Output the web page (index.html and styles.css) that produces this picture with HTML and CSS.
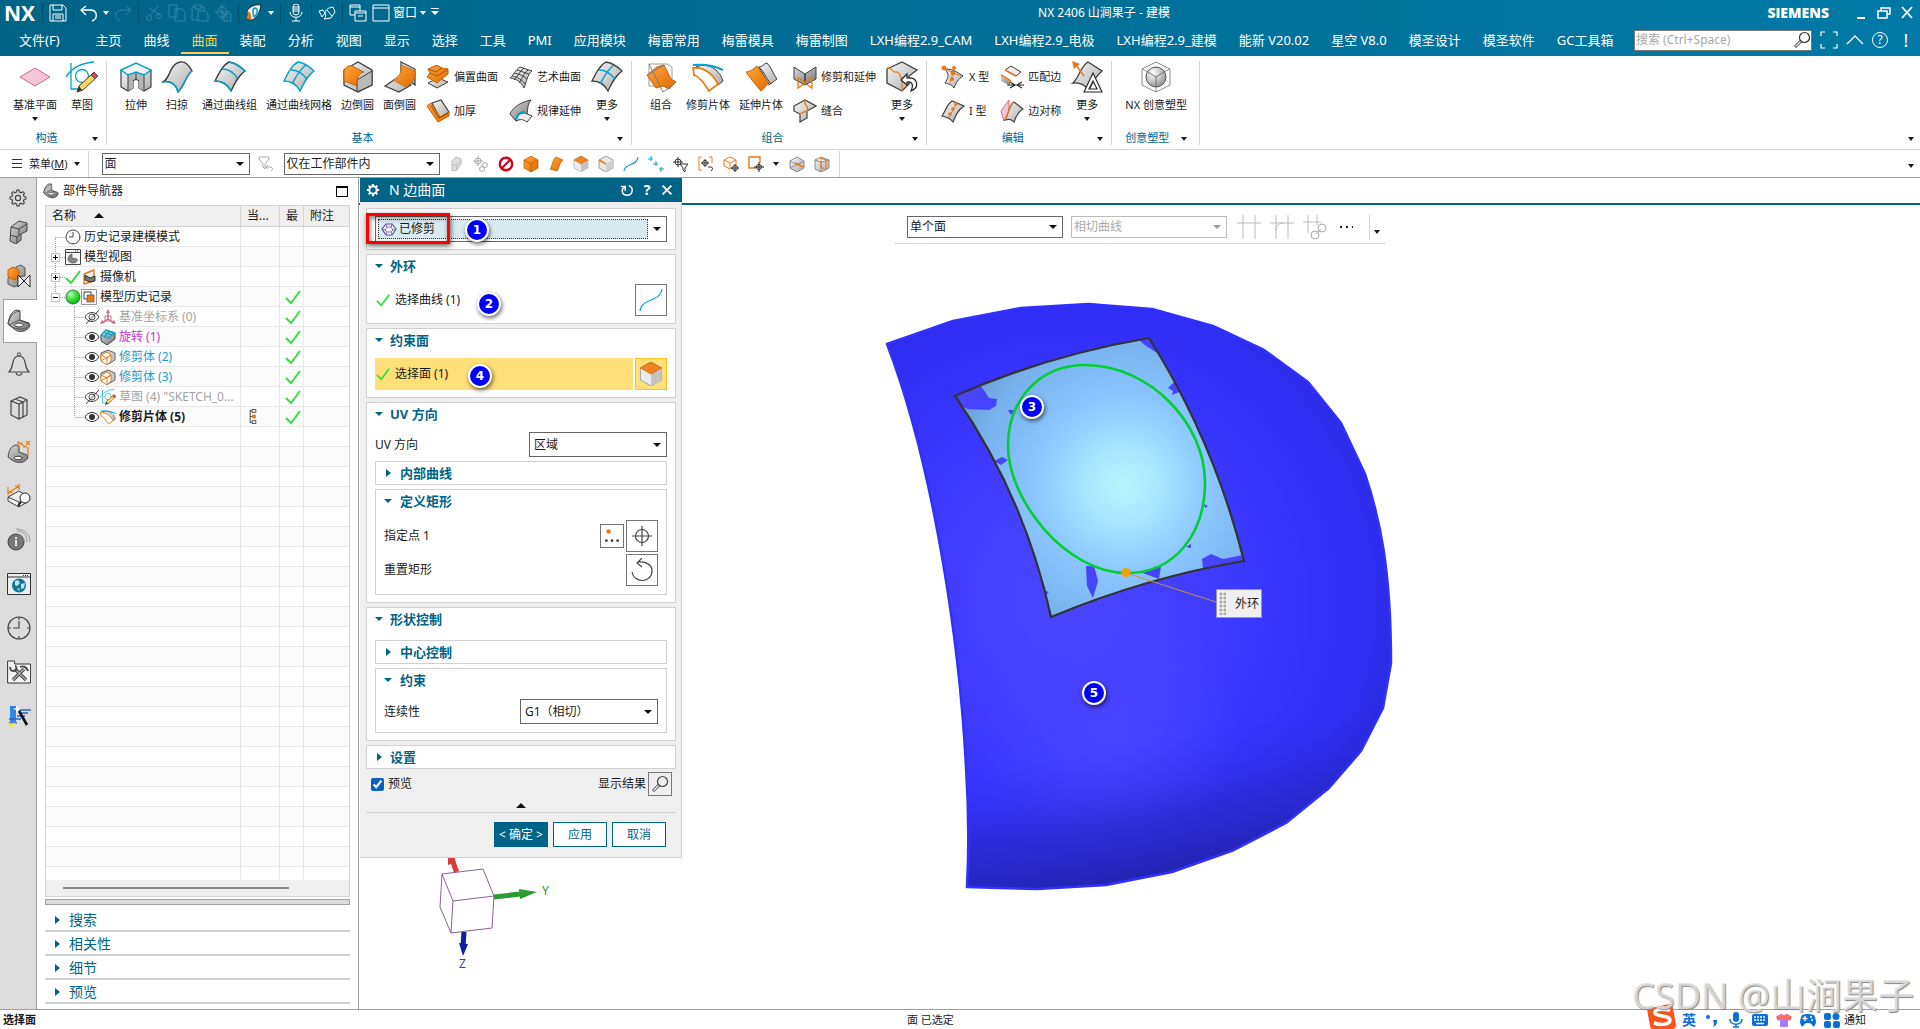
FILE: index.html
```
<!DOCTYPE html>
<html lang="zh-CN">
<head>
    <meta charset="UTF-8">
    <meta name="viewport" content="width=device-width, initial-scale=1.0">
    <title>NX 2406 山涧果子 - 建模</title>
    <link rel="stylesheet" href="styles.css">
</head>
<body>
    <!-- icon sprite -->
    <svg class="sprite" aria-hidden="true">
        <defs>
            <linearGradient id="gray" x1="0" y1="0" x2="1" y2="1"><stop offset="0" stop-color="#f6f6f6"/><stop offset="1" stop-color="#adadad"/></linearGradient>
            <linearGradient id="dark" x1="0" y1="0" x2="1" y2="1"><stop offset="0" stop-color="#d8d8d8"/><stop offset="1" stop-color="#777"/></linearGradient>
            <linearGradient id="orange" x1="0" y1="0" x2="1" y2="1"><stop offset="0" stop-color="#ffa53c"/><stop offset="1" stop-color="#e06c00"/></linearGradient>
            <radialGradient id="ball" cx=".35" cy=".3" r=".8"><stop offset="0" stop-color="#fff"/><stop offset="1" stop-color="#8c8c8c"/></radialGradient>
            <radialGradient id="green" cx=".35" cy=".3" r=".8"><stop offset="0" stop-color="#b6ffb6"/><stop offset=".5" stop-color="#35e03c"/><stop offset="1" stop-color="#12a51a"/></radialGradient>
        </defs>

        <!-- ribbon, 32px -->
        <symbol id="i-plane" viewBox="0 0 32 32"><path d="M1 16 16 7l15 9-15 9z" fill="#f6c5d8" stroke="#cf6a8f"/></symbol>
        <symbol id="i-sketch" viewBox="0 0 32 32"><path d="M5 2v26h13M0 16C5 8 14 2 28 1" fill="none" stroke="#00a3cc" stroke-width="1.3"/><circle cx="16" cy="15" r="6.5" fill="none" stroke="#00a3cc" stroke-width="1.3"/><path d="m11 31 2-6L27 12l4 4-14 13z" fill="#ffd45e" stroke="#3f3f3f"/><path d="m25 14 3-3 4 4-3 3z" fill="#e0485a" stroke="#3f3f3f" stroke-width=".8"/><path d="m11 31 2-6 3 4z" fill="#333"/></symbol>
        <symbol id="i-extrude" viewBox="0 0 32 32"><path d="M1 9v17l7 4 5-3v-7l3-2 3 2v7l5 3 7-4V9z" fill="url(#gray)" stroke="#3f3f3f" stroke-width="1.2"/><path d="M8 15v15l5-3v-8l3-2v-6zM24 15v15l-5-3v-8l-3-2v-6z" fill="#b4b4b4"/><path d="M8 14v16M24 14v16M16 11v7" stroke="#3f3f3f" fill="none"/><path d="M1 9 16 2l15 7-7 5-8-3-8 3z" fill="#f4f4f4" stroke="#00a3cc" stroke-width="1.4"/></symbol>
        <symbol id="i-sweep" viewBox="0 0 32 32"><path d="M1 21C9 20 8 3 19 1c5-1 9 3 12 9-6 4-7 14-14 21-2-8-8-12-16-10z" fill="url(#gray)" stroke="#3f3f3f" stroke-width="1.4"/><path d="M31 10c-6 4-7 14-14 21-2-8-8-12-16-10" fill="none" stroke="#00a3cc" stroke-width="1.5"/></symbol>
        <symbol id="i-thru" viewBox="0 0 32 32"><path d="M1 20C5 12 9 4 15 1c6 1 11 4 16 9-7 5-10 12-14 20-3-6-8-10-16-10z" fill="url(#gray)" stroke="#3f3f3f" stroke-width="1.4"/><path d="M15 1c6 1 11 4 16 9M8 8c7 0 12 4 15 9M1 20c8 0 13 4 16 10" fill="none" stroke="#00a3cc" stroke-width="1.6"/></symbol>
        <symbol id="i-mesh" viewBox="0 0 32 32"><path d="M1 20C5 12 9 4 15 1c6 1 11 4 16 9-7 5-10 12-14 20-3-6-8-10-16-10z" fill="url(#gray)" stroke="#00a3cc" stroke-width="1.5"/><path d="M8 9c7 0 12 4 16 9M23 4C16 9 13 16 9 23" fill="none" stroke="#00a3cc" stroke-width="1.5"/></symbol>
        <symbol id="i-more" viewBox="0 0 32 32"><path d="M1 20C5 12 9 4 15 1c6 1 11 4 16 9-7 5-10 12-14 20-3-6-8-10-16-10z" fill="url(#gray)" stroke="#3f3f3f" stroke-width="1.3"/><path d="M8 9c7 0 12 4 16 9M23 4C16 9 13 16 9 23" fill="none" stroke="#00a3cc" stroke-width="1.5"/></symbol>
        <symbol id="i-edge" viewBox="0 0 32 32"><path d="M2 9 16 1l14 8v15l-14 7-14-7z" fill="url(#gray)" stroke="#3f3f3f" stroke-width="1.3"/><path d="M15 31V19l15-9v14z" fill="#b9b9b9" stroke="#3f3f3f"/><path d="M2 20V10C3 6 7 4 10 5l12 6c-5 1-7 5-7 14z" fill="url(#orange)" stroke="#b85600" stroke-width=".8"/></symbol>
        <symbol id="i-face" viewBox="0 0 32 32"><path d="m17 1 14 7v16L17 14zM1 25l12-8 14 7-12 7z" fill="url(#gray)" stroke="#3f3f3f" stroke-width="1.2"/><path d="m17 4 14 6c1 9-4 13-9 16L9 19c6-3 9-7 8-15z" fill="url(#orange)" stroke="#c96000" stroke-width=".8"/></symbol>
        <symbol id="i-combine" viewBox="0 0 32 32"><path d="M4 3h18l5 3v19H4z" fill="none" stroke="#9a9a9a"/><path d="m2 14 10-8 7-2 7 14 5 3-7 7-6-3-7 2z" fill="url(#orange)" stroke="#c96000"/><path d="m4 3 14 28 9-6M2 14l17-10" fill="none" stroke="#777"/></symbol>
        <symbol id="i-trim" viewBox="0 0 32 32"><path d="M4 6C16 1 27 8 31 20l-5 4C20 14 12 9 4 6z" fill="url(#gray)" stroke="#3f3f3f"/><path d="M1 7c10-1 19 5 25 16l-9 7C12 22 8 16 2 14z" fill="#fff" stroke="#e87a16" stroke-width="1.8"/><path d="M1 4c10-1 20 0 30 5" fill="none" stroke="#00a3cc" stroke-width="2"/></symbol>
        <symbol id="i-extend" viewBox="0 0 32 32"><path d="M14 6c4 0 5-4 8-4 5 5 6 11 10 16l-8 6z" fill="url(#gray)" stroke="#3f3f3f"/><path d="M1 11c4 0 7-3 11-6 5 6 7 12 12 17-3 2-4 5-8 8C10 23 6 18 1 11z" fill="url(#orange)" stroke="#c96000"/><path d="M14 6c6 6 7 11 12 17" fill="none" stroke="#3f3f3f"/></symbol>
        <symbol id="i-more2" viewBox="0 0 32 32"><path d="m1 8 15-7 15 8-8 6v8l-7 7-15-8z" fill="url(#gray)" stroke="#3f3f3f" stroke-width="1.3"/><path d="M1 7c6-1 5 5 9 4s4 6 6 7v12" fill="none" stroke="#e87a16" stroke-width="1.3"/><path d="m21 13-6 6 6 5v-3c5-1 7 3 4 9 9-4 7-14-4-13z" fill="#fff" stroke="#222" stroke-width="1.2"/></symbol>
        <symbol id="i-more3" viewBox="0 0 32 32"><path d="M2 22C8 17 9 6 17 1l14 9c-6 5-9 10-13 19-4-5-9-8-16-7z" fill="url(#gray)" stroke="#3f3f3f" stroke-width="1.3"/><path d="m13 15-8-11" stroke="#e87a16" stroke-width="1.5"/><path d="m1 0 8 3-6 5z" fill="#e87a16"/><path d="m22 12 9 19H13zm0 8-4 8h8z" fill="#fff" fill-rule="evenodd" stroke="#222" stroke-width="1.1"/></symbol>
        <symbol id="i-nxc" viewBox="0 0 32 32"><path d="m16 1 14 7v16l-14 7-14-7V8zM2 8l14 7 14-7M16 15v16" fill="none" stroke="#8a8a8a"/><circle cx="16" cy="16" r="10" fill="url(#ball)" stroke="#555"/><path d="m8 11 8 5 8-5M16 16v10" stroke="#777" fill="none"/></symbol>

        <!-- ribbon, 24px -->
        <symbol id="i-offset" viewBox="0 0 24 24"><path d="m2 18 10-5 10 4-11 6z" fill="url(#gray)" stroke="#3f3f3f"/><path d="m1 12 3-4L2 4l9-4 5 3 6 1v5l-11 9z" fill="url(#orange)" stroke="#c96000"/><path d="m2 4 8 3 6-4M4 8l7 3 11-7" stroke="#a85400" fill="none"/></symbol>
        <symbol id="i-thicken" viewBox="0 0 24 24"><path d="m6 4 9-3 8 12-9 6z" fill="url(#gray)" stroke="#3f3f3f" stroke-width="1.2"/><path d="m1 7 4-3 9 14 9-5v4l-11 6z" fill="url(#orange)" stroke="#c96000"/><path d="m5 7 8 12 9-5" fill="none" stroke="#8a4a00"/></symbol>
        <symbol id="i-art" viewBox="0 0 24 24"><path d="M1 13C5 10 6 5 11 2l12 4c-5 4-5 10-8 17-3-7-8-9-14-10z" fill="url(#gray)" stroke="#444"/><path d="M8 5l12 4M5 8c6 1 9 3 13 6M3 11c6 1 10 4 13 8M15 3c-5 4-6 8-10 12M19 5c-5 4-6 9-9 13" fill="none" stroke="#444"/></symbol>
        <symbol id="i-law" viewBox="0 0 24 24"><path d="M1 15C4 8 12 3 22 1c-4 5-3 9-4 15L7 22z" fill="url(#dark)" stroke="#3f3f3f"/><path d="M7 22c1-6 4-8 9-8l7 3-5 6c-4-3-7-3-11-1z" fill="#eee" stroke="#3f3f3f"/><path d="M7 21c1-6 4-8 9-8" stroke="#00a3cc" stroke-width="2" fill="none"/></symbol>
        <symbol id="i-tae" viewBox="0 0 24 24"><path d="M1 2v12l11 6V9zM23 2v12l-11 6V9z" fill="url(#dark)" stroke="#3f3f3f"/><path d="M5 23V13l7 4 7-4v10l-7-5z" fill="none" stroke="#e87a16" stroke-width="1.4"/></symbol>
        <symbol id="i-sew" viewBox="0 0 24 24"><path d="m1 7 11-6 11 6-9 5v7l-7 4V15l-6-3z" fill="url(#gray)" stroke="#3f3f3f" stroke-width="1.2"/><path d="M12 1c-2 6 5 5 2 11-4 1-5 2-7 3" fill="none" stroke="#e87a16" stroke-width="1.4"/></symbol>
        <symbol id="i-x" viewBox="0 0 24 24"><path d="M4 4c8 0 12 3 18 7-5 3-7 7-9 12-3-4-5-4-9-5 3-5 5-8 0-14z" fill="url(#gray)" stroke="#3f3f3f"/><path d="m3 3 9 5 9 3M12 8 9 17" stroke="#e87a16" fill="none"/><g fill="#e87a16"><circle cx="3" cy="3" r="2.4"/><circle cx="12" cy="8" r="2.4"/><circle cx="13" cy="3" r="2"/><circle cx="11" cy="14" r="2"/></g></symbol>
        <symbol id="i-i" viewBox="0 0 24 24"><path d="M1 17C5 12 5 6 11 2l12 5c-6 4-8 9-11 16-3-4-6-5-11-6z" fill="url(#gray)" stroke="#3f3f3f" stroke-width="1.2"/><path d="M15 5 8 19" stroke="#e87a16"/><g fill="#e87a16"><circle cx="15" cy="5" r="1.8"/><circle cx="12" cy="10" r="1.8"/><circle cx="9" cy="15" r="1.8"/></g></symbol>
        <symbol id="i-match" viewBox="0 0 24 24"><path d="m5 5 6-4 10 6-5 4z" fill="#eee" stroke="#3f3f3f"/><path d="m1 11 10 6v4L1 16z" fill="url(#dark)"/><path d="m5 5 11 6M1 10l10 6" stroke="#e87a16" stroke-width="1.6"/><path d="m10 17 5 3-5 3M22 17l-5 3 5 3M7 20h17" fill="#fff" stroke="#222" stroke-width="1.1"/></symbol>
        <symbol id="i-sym" viewBox="0 0 24 24"><path d="m1 12 8-11v13L4 22z" fill="#f6c5d8" stroke="#cf6a8f"/><path d="M5 21C9 14 9 6 14 3l9 7c-5 3-7 7-9 13-3-3-5-3-9-2z" fill="url(#gray)" stroke="#3f3f3f" stroke-width="1.2"/><path d="M5 21C9 14 9 6 14 3" fill="none" stroke="#e87a16" stroke-width="1.4"/></symbol>

        <!-- title bar, 18px -->
        <symbol id="t-save" viewBox="0 0 18 18"><path d="M1 1h13l3 3v13H1zM4 1v5h9V1M4 17v-7h10v7M6 12h6M6 14h6" fill="none" stroke="currentColor"/></symbol>
        <symbol id="t-undo" viewBox="0 0 18 18"><path d="M6 2 1 6l5 5M1 6h9c8 0 8 9 2 11" fill="none" stroke="currentColor" stroke-width="1.4"/></symbol>
        <symbol id="t-redo" viewBox="0 0 18 18"><path d="m12 2 5 4-5 5M17 6H8c-8 0-8 9-2 11" fill="none" stroke="currentColor"/></symbol>
        <symbol id="t-cut" viewBox="0 0 18 18"><path d="m13 2-8 10M4 4l11 7" stroke="currentColor" fill="none"/><circle cx="4" cy="14" r="2.5" fill="none" stroke="currentColor"/><circle cx="14" cy="12" r="2.5" fill="none" stroke="currentColor"/></symbol>
        <symbol id="t-copy" viewBox="0 0 18 18"><path d="M1 1h8v12H1zM7 5h7l3 3v9H7z" fill="none" stroke="currentColor"/></symbol>
        <symbol id="t-paste" viewBox="0 0 18 18"><path d="M5 3H1v13h5M10 3h3v4M4 1h6v4H4zM7 7h7l3 3v7H7z" fill="none" stroke="currentColor"/></symbol>
        <symbol id="t-target" viewBox="0 0 18 18"><circle cx="8" cy="8" r="5" fill="none" stroke="currentColor"/><path d="M8 0v16M0 8h16M10 10h7v7h-7zM5 5l9 9" stroke="currentColor" fill="none"/></symbol>
        <symbol id="t-body" viewBox="0 0 18 18"><path d="M2 7c3-5 8-7 14-6-1 6-2 10-8 15-3 0-5-1-7-2 3-2 2-4 1-7z" fill="#eee" stroke="#222"/><path d="M2 7c4 1 5 5 4 9l-5-2c2-2 2-4 1-7z" fill="#e87a16"/><path d="M9 4c5 0 4 6 0 9M9 4C7 6 8 9 9 13" stroke="#00a3cc" stroke-width="1.6" fill="none"/></symbol>
        <symbol id="t-mic" viewBox="0 0 18 18"><rect x="6" y="0" width="6" height="11" rx="3" fill="none" stroke="currentColor"/><path d="M3 8c0 7 12 7 12 0M9 13v4M5 17h8M6 3h6M6 5h6M6 7h6" stroke="currentColor" fill="none"/></symbol>
        <symbol id="t-hand" viewBox="0 0 18 18"><path d="m1 7 4-1 2 3-3 4zM7 9c1-4 3-5 8-6l2 5-4 6-7 1c2-2 2-4 1-6z" fill="none" stroke="currentColor"/><path d="m9 6 5 6" stroke="currentColor"/></symbol>
        <symbol id="t-wins" viewBox="0 0 18 18"><path d="M1 1h10v10H1zM1 3h10" fill="none" stroke="currentColor"/><path d="M6 7h11v10H6zM6 9h11M9 12h5" fill="#006487" stroke="currentColor"/></symbol>
        <symbol id="t-win" viewBox="0 0 18 18"><path d="M1 1h16v16H1zM1 4h16" fill="none" stroke="currentColor"/></symbol>
        <symbol id="t-lens" viewBox="0 0 18 18"><circle cx="11.5" cy="6.500" r="5" fill="none" stroke="currentColor" stroke-width="1.2"/><path d="m8 10-6 6" stroke="currentColor" stroke-width="3"/><path d="m7.500 10.500-5 5" stroke="#fff" stroke-width="1.200"/></symbol>
        <symbol id="t-full" viewBox="0 0 18 18"><path d="M1 5V1h4M13 1h4v4M17 13v4h-4M5 17H1v-4" fill="none" stroke="currentColor" stroke-width="1.2"/></symbol>
        <symbol id="t-up" viewBox="0 0 18 18"><path d="m1 13 8-8 8 8" fill="none" stroke="currentColor" stroke-width="1.3"/></symbol>
        <symbol id="t-min" viewBox="0 0 18 18"><path d="M5 14h8" stroke="currentColor" stroke-width="2"/></symbol>
        <symbol id="t-rest" viewBox="0 0 18 18"><path d="M6 7V4h9v6h-3M3 7h9v7H3z" fill="none" stroke="currentColor" stroke-width="1.5"/></symbol>
        <symbol id="t-close" viewBox="0 0 18 18"><path d="m4 3 10 11M14 3 4 14" stroke="currentColor" stroke-width="1.8"/></symbol>

        <!-- selection bar and tree, 16px -->
        <symbol id="s-filter" viewBox="0 0 16 16"><path d="M1 1h10v2L7 8v5l-2-2V8L1 3zM10 9l-2 2 2 2M8 11h4c3 0 3 3 1 4" fill="none" stroke="#aaa"/></symbol>
        <symbol id="s-ghost" viewBox="0 0 16 16"><path d="M4 5 8 1l5 2v5l-4 6-5 1z" fill="#ddd" stroke="#bbb"/><path d="M4 9h5l4-4M9 9v5" stroke="#bbb" fill="none"/></symbol>
        <symbol id="s-link" viewBox="0 0 16 16"><circle cx="5" cy="5" r="3" fill="none" stroke="#aaa"/><path d="M5 0v10M0 5h10" stroke="#aaa"/><circle cx="12" cy="9" r="2.500" fill="none" stroke="#aaa"/><circle cx="9" cy="13" r="2.500" fill="none" stroke="#aaa"/></symbol>
        <symbol id="s-no" viewBox="0 0 16 16"><circle cx="8" cy="8" r="6.200" fill="#fff" stroke="#d0021b" stroke-width="2.400"/><path d="m4 12 8-8" stroke="#d0021b" stroke-width="2.200"/></symbol>
        <symbol id="s-cube" viewBox="0 0 16 16"><path d="m8 0 7 4v8l-7 4-7-4V4z" fill="url(#orange)" stroke="#b85600" stroke-width=".7"/><path d="m1 4 7 4 7-4M8 8v8" stroke="#c96000" fill="none"/></symbol>
        <symbol id="s-sheet" viewBox="0 0 16 16"><path d="M2 13C5 9 4 4 8 1l7 3c-4 3-3 7-6 11z" fill="url(#orange)" stroke="#b85600" stroke-width=".7"/></symbol>
        <symbol id="s-top" viewBox="0 0 16 16"><path d="m8 0 7 4v8l-7 4-7-4V4z" fill="#ececec" stroke="#aaa" stroke-width=".7"/><path d="M8 8v8l7-4V4z" fill="#c4c4c4"/><path d="m8 0 7 4-7 4-7-4z" fill="#ee8420" stroke="#c96000" stroke-width=".5"/></symbol>
        <symbol id="s-line" viewBox="0 0 16 16"><path d="m8 0 7 4v8l-7 4-7-4V4z" fill="#e8e8e8" stroke="#888" stroke-width=".8"/><path d="M8 8v8l7-4V4z" fill="#cfcfcf"/><path d="m1 4 7 4" stroke="#e87a16" stroke-width="1.600"/></symbol>
        <symbol id="s-curve" viewBox="0 0 16 16"><path d="M1 15C2 7 14 10 15 1" fill="none" stroke="#00a3cc" stroke-width="1.200"/></symbol>
        <symbol id="s-pts" viewBox="0 0 16 16"><path d="M3 0v5M0 3h5M8 5v5M5 8h5M13 11v5M11 13h5" stroke="#00a3cc"/></symbol>
        <symbol id="s-tf" viewBox="0 0 16 16"><circle cx="5" cy="6" r="3" fill="none" stroke="#333"/><path d="M5 1v10M0 6h10" stroke="#333"/><path d="M7 8h8l-3 4v4l-2-2v-2z" fill="#fff" stroke="#333"/></symbol>
        <symbol id="s-tb" viewBox="0 0 16 16"><path d="M4 1H1v13h3M11 1h3v6" fill="none" stroke="#e87a16"/><circle cx="7" cy="7" r="2.500" fill="none" stroke="#333"/><path d="M7 3v8M3 7h8M10 11h3c2 0 2 3 0 4" stroke="#333" fill="none"/></symbol>
        <symbol id="s-ct" viewBox="0 0 16 16"><path d="m7 1 6 3v6l-6 3-6-3V4zM1 4l6 3 6-3M7 7v6" fill="none" stroke="#e87a16"/><circle cx="12" cy="12" r="2.500" fill="#fff" stroke="#333"/><path d="M12 8v8M8 12h8" stroke="#333"/></symbol>
        <symbol id="s-sq" viewBox="0 0 16 16"><path d="M8 12H1V1h11v6" fill="none" stroke="#e87a16" stroke-width="1.400"/><circle cx="11" cy="11" r="2.500" fill="none" stroke="#222"/><path d="M11 6v10M6 11h10" stroke="#222"/></symbol>
        <symbol id="s-g1" viewBox="0 0 16 16"><path d="m8 1 7 4v7l-7 4-7-4V5z" fill="url(#gray)" stroke="#888"/><path d="m1 5 7 4 7-4M1 12l14-7" stroke="#999" fill="none"/><path d="m6 7 8 4" stroke="#e87a16" stroke-width="1.600"/></symbol>
        <symbol id="s-g2" viewBox="0 0 16 16"><path d="m1 4 6-3 8 3v8l-8 4-6-3zM1 4l6 2 8-2M7 6v10" fill="url(#gray)" stroke="#888"/><path d="M7 2v9l5 3V4z" fill="none" stroke="#e87a16"/></symbol>
        <symbol id="n-clock" viewBox="0 0 16 16"><circle cx="8" cy="8" r="7" fill="#fff" stroke="#444"/><path d="M8 3v5H4M8 14v1M14 8h1" fill="none" stroke="#444"/></symbol>
        <symbol id="n-view" viewBox="0 0 16 16"><path d="M.5.5h15v15H.5zM0 3.500h16" fill="#f4f4f4" stroke="#444"/><path d="M10 2h4" stroke="#444" stroke-dasharray="1 1"/><path d="M3 11c0-3 1-5 4-6v4l5 1c1 2-1 4-4 4-2 0-4-1-5-3z" fill="#888" stroke="#444" stroke-width=".6"/></symbol>
        <symbol id="n-check" viewBox="0 0 16 16"><path d="m1 9 5 5L15 2" fill="none" stroke="#2be239" stroke-width="2"/></symbol>
        <symbol id="n-cam" viewBox="0 0 16 16"><path d="M3 5 13 1v11L3 15z" fill="#eee" stroke="#e87a16" stroke-width="1.400"/><path d="m4 6 5 3 5-2v5l-5 1-5-2z" fill="#777" stroke="#333"/></symbol>
        <symbol id="n-ball" viewBox="0 0 16 16"><circle cx="8" cy="8" r="7" fill="url(#green)" stroke="#2b5c2b" stroke-width=".8"/></symbol>
        <symbol id="n-hist" viewBox="0 0 16 16"><path d="M.5.5h15v15H.5z" fill="#f4f4f4" stroke="#999"/><path d="M3 3h7v7H3z" fill="#fff" stroke="#444"/><path d="M6 6h7v7H6z" fill="#e87a16" stroke="#444" stroke-width=".6"/></symbol>
        <symbol id="n-eye" viewBox="0 0 16 16"><path d="M1 8c3-6 11-6 14 0-3 6-11 6-14 0z" fill="#fff" stroke="#333"/><circle cx="8" cy="8" r="3" fill="#333"/></symbol>
        <symbol id="n-hide" viewBox="0 0 16 16"><path d="M1 8c3-6 11-6 14 0-3 6-11 6-14 0z" fill="none" stroke="#444"/><circle cx="8" cy="8" r="3" fill="none" stroke="#444"/><path d="M2 15 15 1" stroke="#444"/></symbol>
        <symbol id="n-csys" viewBox="0 0 16 16"><path d="M8 2v8l-6 4M8 10l6 4" fill="none" stroke="#cf6a8f" stroke-width="1.400"/><path d="m8 0 2 4H6zM0 15l2-4 3 3zM16 15l-2-4-3 3z" fill="#cf6a8f"/><path d="M5 7h6v5H5z" fill="none" stroke="#cf6a8f"/></symbol>
        <symbol id="n-rev" viewBox="0 0 16 16"><path d="m1 6 5-5 9 3v6l-8 6-6-4z" fill="url(#dark)" stroke="#444"/><path d="m1 6 5-5 9 3-7 5zM3 3l9 3M4 8l6-6" fill="none" stroke="#00a3cc" stroke-width="1.200"/></symbol>
        <symbol id="n-trimb" viewBox="0 0 16 16"><path d="m8 1 7 3v7l-7 4-7-4V4z" fill="#c8c8c8" stroke="#666"/><path d="m1 6 6-3 4 3v6l-4 4-6-4z" fill="#fff" stroke="#e87a16"/><path d="m1 6 6 3 4-3M7 9v7M1 12l10-6" fill="none" stroke="#e87a16"/></symbol>
        <symbol id="n-tl" viewBox="0 0 8 16"><path d="M1 2h2M1 8h2M1 14h2M1 1v14" stroke="#444"/><path d="M3 .5h4v3H3zM3 12.500h4v3H3z" fill="#fff" stroke="#444"/><path d="M3 6h4v4H3z" fill="#e87a16"/></symbol>
        <symbol id="n-poly" viewBox="0 0 16 16"><path d="m5 3 6 0 4 5-4 6H5L1 8z" fill="#fff" stroke="#5a4a9a" stroke-width="1.200"/><path d="m6 6 4 0 2 3-2 2H6L4 9zM5 3l1 3M11 3l-1 3M15 8l-3 1M11 14l-1-3M5 14l1-3M1 8l3 1" fill="none" stroke="#7b6bb5"/></symbol>

        <!-- tree connectors -->
        <symbol id="c-first" viewBox="0 0 19 20"><path d="M9.500 10v10M9.500 10.500H19" stroke="#999" stroke-dasharray="1 1"/></symbol>
        <symbol id="c-plus" viewBox="0 0 19 20"><path d="M9.500 0v20M14 10.500h5" stroke="#999" stroke-dasharray="1 1"/><path d="M5.500 6.500h8v8h-8z" fill="#fff" stroke="#bbb"/><path d="M7 10.500h5M9.500 8v5" stroke="#000"/></symbol>
        <symbol id="c-minus" viewBox="0 0 19 20"><path d="M9.500 0v6M14 10.500h5" stroke="#999" stroke-dasharray="1 1"/><path d="M5.500 6.500h8v8h-8z" fill="#fff" stroke="#bbb"/><path d="M7 10.500h5" stroke="#000"/></symbol>
        <symbol id="c-child" viewBox="0 0 38 20"><path d="M28.500 0v20M28.500 10.500H38" stroke="#999" stroke-dasharray="1 1"/></symbol>
        <symbol id="c-last" viewBox="0 0 38 20"><path d="M28.500 0v10M28.500 10.500H38" stroke="#999" stroke-dasharray="1 1"/></symbol>

        <!-- resource bar, 24px -->
        <symbol id="r-gear" viewBox="0 0 24 24"><path d="M10.500 3h3l.500 2.500 2.300 1L18.500 5l2.100 2.100-1.500 2.200 1 2.200 2.400.5v3l-2.400.5-1 2.300 1.500 2.100-2.100 2.100-2.200-1.500-2.300 1-.500 2.500h-3L10 21.500l-2.300-1L5.500 22l-2.100-2.100 1.500-2.100-1-2.300L1.500 15v-3l2.400-.5 1-2.200-1.500-2.200L5.500 5l2.200 1.500 2.300-1z" fill="none" stroke="#444" stroke-width="1.500" transform="translate(0 -1.500)"/><circle cx="12" cy="12" r="3.500" fill="none" stroke="#444" stroke-width="1.500"/></symbol>
        <symbol id="r-asm" viewBox="0 0 24 24"><path d="M4 7 12 1l8 2v8l-6 3v6l-5 4-6-3z" fill="url(#dark)" stroke="#444"/><path d="m4 7 8 2 8-5M12 9v6M3 15l7 2 4-3M10 17v6" fill="none" stroke="#444"/></symbol>
        <symbol id="r-con" viewBox="0 0 24 24"><path d="m9 3 5-2 4 3v8l-9 1zM1 14l5-3 6 3v7l-5 2-6-3z" fill="url(#dark)" stroke="#555"/><path d="m1 6 5-3 6 3v7l-5 3-6-3z" fill="url(#orange)" stroke="#c96000"/><path d="M11 11v12L23 11v12z" fill="#fff" stroke="#222"/></symbol>
        <symbol id="r-part" viewBox="0 0 24 24"><path d="M1 15C2 7 5 2 10 1l3 1v9l9 3c2 3 0 6-5 8-5 1-8 0-11-3z" fill="url(#dark)" stroke="#444"/><path d="M1 15c2-8 5-12 12-13M2 16l10-5 10 4c0 3-4 5-8 5-6 0-9-2-12-4z" fill="none" stroke="#555"/><ellipse cx="12" cy="16" rx="4.500" ry="2" fill="#eee" stroke="#444"/></symbol>
        <symbol id="r-bell" viewBox="0 0 24 24"><path d="M2 20c3-3 3-5 4-10 1-4 3-6 6-6s5 2 6 6c1 5 1 7 4 10zM9 21c1 3 5 3 6 0" fill="none" stroke="#444" stroke-width="1.200"/><circle cx="12" cy="2.500" r="1.700" fill="none" stroke="#444"/></symbol>
        <symbol id="r-book" viewBox="0 0 24 24"><path d="m4 5 9-4 7 3v15l-8 4-8-4zM4 5l8 3 8-4M12 8v15M8 3l8 3M16 6v15" fill="none" stroke="#444" stroke-width="1.200"/></symbol>
        <symbol id="r-dim" viewBox="0 0 24 24"><path d="M1 17C2 10 4 6 9 5l3 1v6l8 3c2 3 0 5-4 7-5 1-8 0-11-2z" fill="url(#dark)" stroke="#444"/><ellipse cx="11" cy="18" rx="4" ry="1.800" fill="#eee" stroke="#444"/><path d="M11 1v6M12 3l7 4M21 7v9M19 1l4 4M23 1l-4 4M11 3h5M20 7l-4 0" stroke="#e87a16" fill="none" stroke-width="1.200"/></symbol>
        <symbol id="r-meas" viewBox="0 0 24 24"><path d="m1 13 11-6 10 6v4l-10 6-11-6z" fill="#eee" stroke="#444"/><path d="m1 13 11 5 10-5M12 18v5" stroke="#444" fill="none"/><path d="M1 3v8M12 0v6M1 9l11-7M1 9l5-1M12 2 8 2" stroke="#e87a16" fill="none" stroke-width="1.200"/><circle cx="18" cy="14" r="5" fill="#fff" stroke="#222"/><path d="m14 18-3 4" stroke="#222" stroke-width="2"/></symbol>
        <symbol id="r-info" viewBox="0 0 24 24"><circle cx="9" cy="14" r="8" fill="#777" stroke="#444"/><path d="M9 12v6M9 9v2" stroke="#fff" stroke-width="1.600"/><path d="M10 3c6 0 10 4 10 11M9 1c8 0 14 5 14 13M11 6c4 1 6 4 6 7" fill="none" stroke="#999"/></symbol>
        <symbol id="r-web" viewBox="0 0 24 24"><path d="M.5 1.500h23v21H.5zM0 5h24" fill="#eee" stroke="#333"/><path d="M16 3.500h6" stroke="#333" stroke-dasharray="1 1"/><circle cx="12" cy="13.500" r="7" fill="#12769b"/><path d="m8 9 3-1 2 3-3 3-2-1zM14 12l4-1-1 5-3 1zM10 17l2-1 1 3z" fill="#bfe3ef"/></symbol>
        <symbol id="r-clock" viewBox="0 0 24 24"><circle cx="12" cy="12" r="11" fill="none" stroke="#444" stroke-width="1.200"/><path d="M12 5v7H6M12 1v3M12 20v3M1 12h3M20 12h3" fill="none" stroke="#444" stroke-width="1.200"/></symbol>
        <symbol id="r-tool" viewBox="0 0 24 24"><path d="M.6 1h7v3h16v19H.6z" fill="#f4f4f4" stroke="#333"/><path d="m6 20 11-11M8 9l11 11" stroke="#444" stroke-width="3.500"/><path d="m6 20 11-11M8 9l11 11" stroke="#aaa" stroke-width="1.500"/><path d="M3 7c0 4 3 5 6 3 1-2 0-4-1-4M13 7c4-2 7 1 8 4" fill="none" stroke="#444" stroke-width="1.800"/></symbol>
        <symbol id="r-hook" viewBox="0 0 24 24"><path d="M3 2h6v16H3z" fill="#2e86e8"/><path d="M12 6h12M13 9h8M2 15h12M2 19h8M10 12h8" stroke="#2f62c8" stroke-width="1.300"/><path d="m12 7 8 14" stroke="#111" stroke-width="2.600"/><path d="m10 1 1 3 3 1-3 1-1 3-1-3-3-1 3-1z" fill="#fff"/><path d="M1 20h8M3 22h4" stroke="#f4e23a" stroke-width="1.500"/></symbol>
    </svg>

    <header class="app-header">
        <div class="title-row">
            <div class="quick">
                <span class="logo">NX</span><i class="vsep"></i>
                <svg class="i18"><use href="#t-save"/></svg><i class="vsep"></i>
                <svg class="i18"><use href="#t-undo"/></svg><i class="tri"></i>
                <svg class="i18 off"><use href="#t-redo"/></svg><i class="vsep"></i>
                <svg class="i18 off"><use href="#t-cut"/></svg>
                <svg class="i18 off"><use href="#t-copy"/></svg>
                <svg class="i18 off"><use href="#t-paste"/></svg>
                <svg class="i18 off"><use href="#t-target"/></svg><i class="vsep"></i>
                <svg class="i18"><use href="#t-body"/></svg><i class="tri"></i><i class="vsep"></i>
                <svg class="i18"><use href="#t-mic"/></svg><i class="vsep"></i>
                <svg class="i18"><use href="#t-hand"/></svg><i class="vsep"></i>
                <svg class="i18"><use href="#t-wins"/></svg>
                <div class="window-menu"><svg class="i18"><use href="#t-win"/></svg><span>窗口</span><i class="tri"></i></div>
                <i class="tri bar"></i>
            </div>
            <div class="doc-title">NX 2406 山涧果子 - 建模</div>
            <div class="win-ctl">
                <b>SIEMENS</b>
                <svg class="i18"><use href="#t-min"/></svg>
                <svg class="i18"><use href="#t-rest"/></svg>
                <svg class="i18"><use href="#t-close"/></svg>
            </div>
        </div>
        <nav class="tabs">
            <a href="#" class="file">文件(F)</a>
            <a href="#">主页</a>
            <a href="#">曲线</a>
            <a href="#" class="active">曲面</a>
            <a href="#">装配</a>
            <a href="#">分析</a>
            <a href="#">视图</a>
            <a href="#">显示</a>
            <a href="#">选择</a>
            <a href="#">工具</a>
            <a href="#">PMI</a>
            <a href="#">应用模块</a>
            <a href="#">梅雷常用</a>
            <a href="#">梅雷模具</a>
            <a href="#">梅雷制图</a>
            <a href="#">LXH编程2.9_CAM</a>
            <a href="#">LXH编程2.9_电极</a>
            <a href="#">LXH编程2.9_建模</a>
            <a href="#">能新 V20.02</a>
            <a href="#">星空 V8.0</a>
            <a href="#">模圣设计</a>
            <a href="#">模圣软件</a>
            <a href="#">GC工具箱</a>
            <div class="tab-tools">
                <label class="search"><input type="text" placeholder="搜索 (Ctrl+Space)" aria-label="搜索"><svg class="i18"><use href="#t-lens"/></svg></label>
                <svg class="i18"><use href="#t-full"/></svg>
                <svg class="i18"><use href="#t-up"/></svg>
                <span class="help">?</span>
                <span class="bang">!</span>
            </div>
        </nav>
    </header>

    <section class="ribbon">
        <div class="group">
            <div class="tools">
                <button class="big"><svg><use href="#i-plane"/></svg>基准平面<i class="tri"></i></button>
                <button class="big"><svg><use href="#i-sketch"/></svg>草图</button>
            </div>
            <div class="caption">构造<i class="tri"></i></div>
        </div>
        <div class="group">
            <div class="tools">
                <button class="big"><svg><use href="#i-extrude"/></svg>拉伸</button>
                <button class="big"><svg><use href="#i-sweep"/></svg>扫掠</button>
                <button class="big"><svg><use href="#i-thru"/></svg>通过曲线组</button>
                <button class="big"><svg><use href="#i-mesh"/></svg>通过曲线网格</button>
                <button class="big"><svg><use href="#i-edge"/></svg>边倒圆</button>
                <button class="big"><svg><use href="#i-face"/></svg>面倒圆</button>
                <div class="stack">
                    <button><svg><use href="#i-offset"/></svg>偏置曲面</button>
                    <button><svg><use href="#i-thicken"/></svg>加厚</button>
                </div>
                <div class="stack">
                    <button><svg><use href="#i-art"/></svg>艺术曲面</button>
                    <button><svg><use href="#i-law"/></svg>规律延伸</button>
                </div>
                <button class="big"><svg><use href="#i-more"/></svg>更多<i class="tri"></i></button>
            </div>
            <div class="caption">基本<i class="tri"></i></div>
        </div>
        <div class="group">
            <div class="tools">
                <button class="big"><svg><use href="#i-combine"/></svg>组合</button>
                <button class="big"><svg><use href="#i-trim"/></svg>修剪片体</button>
                <button class="big"><svg><use href="#i-extend"/></svg>延伸片体</button>
                <div class="stack">
                    <button><svg><use href="#i-tae"/></svg>修剪和延伸</button>
                    <button><svg><use href="#i-sew"/></svg>缝合</button>
                </div>
                <button class="big"><svg><use href="#i-more2"/></svg>更多<i class="tri"></i></button>
            </div>
            <div class="caption">组合<i class="tri"></i></div>
        </div>
        <div class="group">
            <div class="tools">
                <div class="stack">
                    <button><svg><use href="#i-x"/></svg>X 型</button>
                    <button><svg><use href="#i-i"/></svg>I 型</button>
                </div>
                <div class="stack">
                    <button><svg><use href="#i-match"/></svg>匹配边</button>
                    <button><svg><use href="#i-sym"/></svg>边对称</button>
                </div>
                <button class="big"><svg><use href="#i-more3"/></svg>更多<i class="tri"></i></button>
            </div>
            <div class="caption">编辑<i class="tri"></i></div>
        </div>
        <div class="group">
            <div class="tools">
                <button class="big"><svg><use href="#i-nxc"/></svg>NX 创意塑型</button>
            </div>
            <div class="caption">创意塑型<i class="tri"></i></div>
        </div>
        <i class="tri ribbon-end"></i>
    </section>

    <section class="selbar">
        <button class="menu"><span class="burger"></span>菜单(<u>M</u>)<i class="tri"></i></button>
        <i class="vline"></i>
        <span class="combo w148"><select aria-label="类型过滤器"><option>面</option></select></span>
        <svg class="i16"><use href="#s-filter"/></svg>
        <span class="combo w156"><select aria-label="选择范围"><option>仅在工作部件内</option></select></span>
        <div class="sel-icons">
            <svg class="i16"><use href="#s-ghost"/></svg>
            <svg class="i16"><use href="#s-link"/></svg>
            <svg class="i16"><use href="#s-no"/></svg>
            <svg class="i16"><use href="#s-cube"/></svg>
            <svg class="i16"><use href="#s-sheet"/></svg>
            <svg class="i16"><use href="#s-top"/></svg>
            <svg class="i16"><use href="#s-line"/></svg>
            <svg class="i16"><use href="#s-curve"/></svg>
            <svg class="i16"><use href="#s-pts"/></svg>
            <svg class="i16"><use href="#s-tf"/></svg>
            <svg class="i16"><use href="#s-tb"/></svg>
            <svg class="i16"><use href="#s-ct"/></svg>
            <svg class="i16"><use href="#s-sq"/></svg>
        </div>
        <i class="tri"></i>
        <div class="sel-icons">
            <svg class="i16"><use href="#s-g1"/></svg>
            <svg class="i16"><use href="#s-g2"/></svg>
        </div>
        <i class="vline"></i>
        <i class="tri end"></i>
    </section>

    <main class="work">
        <aside class="resbar">
            <button class="gear"><svg><use href="#r-gear"/></svg></button>
            <button><svg><use href="#r-asm"/></svg></button>
            <button><svg><use href="#r-con"/></svg></button>
            <button class="on"><svg><use href="#r-part"/></svg></button>
            <button><svg><use href="#r-bell"/></svg></button>
            <button><svg><use href="#r-book"/></svg></button>
            <button><svg><use href="#r-dim"/></svg></button>
            <button><svg><use href="#r-meas"/></svg></button>
            <button><svg><use href="#r-info"/></svg></button>
            <button><svg><use href="#r-web"/></svg></button>
            <button><svg><use href="#r-clock"/></svg></button>
            <button><svg><use href="#r-tool"/></svg></button>
            <button><svg><use href="#r-hook"/></svg></button>
        </aside>

        <aside class="navigator">
            <div class="nav-title"><svg class="i16"><use href="#r-part"/></svg>部件导航器<i class="maxi"></i></div>
            <div class="tree">
                <div class="tree-scroll">
                    <table>
                        <colgroup><col><col class="c2"><col class="c3"><col class="c4"></colgroup>
                        <thead>
                            <tr><th>名称<i class="sort"></i></th><th>当...</th><th>最</th><th>附注</th></tr>
                        </thead>
                        <tbody id="rows">
                            <tr><td><div class="node"><svg class="c19"><use href="#c-first"/></svg><svg class="i16"><use href="#n-clock"/></svg><span>历史记录建模模式</span></div></td><td></td><td></td><td></td></tr>
                            <tr><td><div class="node"><svg class="c19"><use href="#c-plus"/></svg><svg class="i16"><use href="#n-view"/></svg><span>模型视图</span></div></td><td></td><td></td><td></td></tr>
                            <tr><td><div class="node"><svg class="c19"><use href="#c-plus"/></svg><svg class="i16"><use href="#n-check"/></svg><svg class="i16"><use href="#n-cam"/></svg><span>摄像机</span></div></td><td></td><td></td><td></td></tr>
                            <tr><td><div class="node"><svg class="c19"><use href="#c-minus"/></svg><svg class="i16"><use href="#n-ball"/></svg><svg class="i16"><use href="#n-hist"/></svg><span>模型历史记录</span></div></td><td></td><td><svg class="i16"><use href="#n-check"/></svg></td><td></td></tr>
                            <tr class="dim"><td><div class="node"><svg class="c38"><use href="#c-child"/></svg><svg class="i16"><use href="#n-hide"/></svg><svg class="i16"><use href="#n-csys"/></svg><span>基准坐标系 (0)</span></div></td><td></td><td><svg class="i16"><use href="#n-check"/></svg></td><td></td></tr>
                            <tr class="magenta"><td><div class="node"><svg class="c38"><use href="#c-child"/></svg><svg class="i16"><use href="#n-eye"/></svg><svg class="i16"><use href="#n-rev"/></svg><span>旋转 (1)</span></div></td><td></td><td><svg class="i16"><use href="#n-check"/></svg></td><td></td></tr>
                            <tr class="cyan"><td><div class="node"><svg class="c38"><use href="#c-child"/></svg><svg class="i16"><use href="#n-eye"/></svg><svg class="i16"><use href="#n-trimb"/></svg><span>修剪体 (2)</span></div></td><td></td><td><svg class="i16"><use href="#n-check"/></svg></td><td></td></tr>
                            <tr class="cyan"><td><div class="node"><svg class="c38"><use href="#c-child"/></svg><svg class="i16"><use href="#n-eye"/></svg><svg class="i16"><use href="#n-trimb"/></svg><span>修剪体 (3)</span></div></td><td></td><td><svg class="i16"><use href="#n-check"/></svg></td><td></td></tr>
                            <tr class="dim"><td><div class="node"><svg class="c38"><use href="#c-child"/></svg><svg class="i16"><use href="#n-hide"/></svg><svg class="i16"><use href="#i-sketch"/></svg><span>草图 (4) "SKETCH_0...</span></div></td><td></td><td><svg class="i16"><use href="#n-check"/></svg></td><td></td></tr>
                            <tr class="bold"><td><div class="node"><svg class="c38"><use href="#c-last"/></svg><svg class="i16"><use href="#n-eye"/></svg><svg class="i16"><use href="#i-trim"/></svg><span>修剪片体 (5)</span></div></td><td><svg class="tl"><use href="#n-tl"/></svg></td><td><svg class="i16"><use href="#n-check"/></svg></td><td></td></tr>
                        </tbody>
                    </table>
                </div>
                <div class="hscroll"><i></i></div>
            </div>
            <div class="splitter"></div>
            <details class="fold"><summary>搜索</summary></details>
            <details class="fold"><summary>相关性</summary></details>
            <details class="fold"><summary>细节</summary></details>
            <details class="fold"><summary>预览</summary></details>
        </aside>

        <section class="viewport">
            <svg class="model" viewBox="880 300 520 600">
                <defs>
                    <radialGradient id="body1" gradientUnits="userSpaceOnUse" cx="1070" cy="600" r="370">
                        <stop offset="0" stop-color="#4a46ff"/><stop offset=".35" stop-color="#403dff"/><stop offset=".6" stop-color="#3634fd"/><stop offset=".8" stop-color="#302ef4"/><stop offset="1" stop-color="#2a28cc"/>
                    </radialGradient>
                    <radialGradient id="body3" gradientUnits="userSpaceOnUse" cx="1110" cy="730" r="130">
                        <stop offset="0" stop-color="#4644ff"/><stop offset="1" stop-color="#4644ff" stop-opacity="0"/>
                    </radialGradient>
                    <linearGradient id="body2" gradientUnits="userSpaceOnUse" x1="1060" y1="760" x2="1085" y2="900">
                        <stop offset="0" stop-color="#2222a8" stop-opacity="0"/><stop offset=".3" stop-color="#2222a8" stop-opacity=".14"/><stop offset=".7" stop-color="#2222a8" stop-opacity=".6"/><stop offset="1" stop-color="#2020a0" stop-opacity=".9"/>
                    </linearGradient>
                    <radialGradient id="patch" gradientUnits="userSpaceOnUse" cx="1123" cy="487" r="180">
                        <stop offset="0" stop-color="#b8f5ff"/><stop offset=".2" stop-color="#a9e6ff"/><stop offset=".5" stop-color="#8ac5ff"/><stop offset=".8" stop-color="#79b3ef"/><stop offset="1" stop-color="#6a9fd6"/>
                    </radialGradient>
                    <path id="hull" d="M887 345 953 322 1021 309 1088 305 1152 310 1213 327 1264 351 1308 383 1341 424 1365 475C1380 520 1391 570 1391 664L1383 709 1361 752 1329 789 1286 824 1234 851 1172 873 1106 886 1037 890 967 888Q970 830 966 768C960 650 935 470 887 345z"/>
                    <path id="sheet" d="M955 397Q1045 357 1149 339 1214 442 1244 562 1147 578 1051 618 1025 498 955 397z"/>
                    <clipPath id="pc"><use href="#sheet"/></clipPath>
                </defs>
                <use href="#hull" fill="url(#body1)"/>
                <use href="#hull" fill="url(#body3)"/>
                <use href="#hull" fill="url(#body2)"/>
                <use href="#hull" fill="none" stroke="#3030ff" stroke-width="2.500" stroke-linejoin="round"/>
                <use href="#sheet" fill="url(#patch)"/>
                <g fill="#4644ff" clip-path="url(#pc)">
                    <path d="M950 400 981 387 989 399 997 400 996 407 989 411 967 410z"/>
                    <path d="m1138 340 13-3 8 18-13-8z"/>
                    <path d="m1174 383-6 6 5 3-1 4 10-4z"/>
                    <path d="m1008 411 6 0-3 5zM994 462l8-4 6 3-7 5zM1086 567l8 0 4 15-5 17-6-12zM1043 591l6 2-4 4z"/>
                    <path d="m1202 560 9-5 12 5 20-4v10l-40 4zM1142 574l19-7-2 13-8-3zM1204 505l4 2-3 2zM1186 548l5-3v4z"/>
                </g>
                <use href="#sheet" fill="none" stroke="#333" stroke-width="2.200"/>
                <path d="M1085 366C1150 366 1205 425 1205 483 1205 535 1175 574 1127 574 1065 574 1008 500 1008 447 1008 400 1040 366 1085 366z" fill="none" stroke="#00cf2e" stroke-width="2.600"/>
                <path d="m1126 574 90 29" stroke="#c89040" stroke-width="1"/>
                <circle cx="1126" cy="573.500" r="4.500" fill="#f0a000"/>
            </svg>
            <div class="callout"><i class="grip"></i>外环</div>
            <span class="badge b3">3</span>
            <span class="badge b5">5</span>

            <svg class="triad" viewBox="430 855 130 120">
                <path d="M448 855h6l2 8 3 8-5 2-3-9-3 1z" fill="#e03a3a"/>
                <path d="m494 897 26-3" stroke="#2c9c32" stroke-width="5"/><path d="m519 889 18 3-17 7z" fill="#2c9c32"/>
                <path d="m464 932-1 14" stroke="#0a1fa8" stroke-width="5"/><path d="m459 943 9 1-5 12z" fill="#0a1fa8"/>
                <path d="M442 874 483 869 494 896 492 928 451 933 440 907zM442 874 453 901 451 933M453 901 494 896" fill="#fff" stroke="#8d5f92"/>
                <text x="542" y="895" fill="#2c9c32">Y</text><text x="459" y="968" fill="#2a3ae0">Z</text>
            </svg>

            <div class="edge-line"></div>
            <div class="float-bar">
                <span class="combo w156"><select aria-label="面规则"><option>单个面</option></select></span>
                <span class="combo w156 off"><select aria-label="曲线规则" disabled><option>相切曲线</option></select></span>
                <svg viewBox="0 0 24 24"><path d="M6 0v24M18 0v24M0 8h24" stroke="#bbb"/></svg>
                <svg viewBox="0 0 24 24"><path d="M6 0v24M18 0v24M0 8h24M6 16c0-5 2-8 8-8" fill="none" stroke="#bbb"/></svg>
                <svg viewBox="0 0 24 24"><path d="M5 0v18M14 0v10M0 7h18" stroke="#bbb"/><circle cx="19" cy="13" r="4" fill="none" stroke="#aaa"/><circle cx="12" cy="20" r="4" fill="none" stroke="#aaa"/><path d="m13 19 5-5" stroke="#aaa"/></svg>
                <span class="dots"></span>
                <i class="vline"></i><i class="tri"></i>
            </div>

            <form class="dialog" onsubmit="return false">
                <div class="dlg-title">
                    <svg viewBox="0 0 16 16"><path d="M8 1v3M8 12v3M1 8h3M12 8h3M3 3l2 2M11 11l2 2M13 3l-2 2M5 11l-2 2" stroke="#fff" stroke-width="2.400"/><circle cx="8" cy="8" r="4.200" fill="none" stroke="#fff" stroke-width="2.200"/></svg>
                    <span>N 边曲面</span>
                    <svg viewBox="0 0 16 16"><path d="M10 3c6 2 5 11-2 11-6 0-7-7-3-9M1 4h5v5" fill="none" stroke="#fff" stroke-width="1.600"/></svg>
                    <b>?</b>
                    <svg viewBox="0 0 16 16"><path d="m3 3 10 10M13 3 3 13" stroke="#fff" stroke-width="2.200"/></svg>
                </div>
                <div class="dlg-body">
                    <div class="panel type">
                        <span class="combo focus"><span class="inner"><svg class="i16"><use href="#n-poly"/></svg><select aria-label="类型"><option>已修剪</option></select></span></span>
                        <i class="redbox"></i><span class="badge b1">1</span>
                    </div>
                    <details class="panel" open>
                        <summary>外环</summary>
                        <div class="pbody">
                            <div class="line"><svg class="i14"><use href="#n-check"/></svg><span>选择曲线 (1)</span><span class="badge b2">2</span><button class="sq" aria-label="曲线"><svg viewBox="0 0 24 24"><path d="M1 23C3 9 21 15 23 1" fill="none" stroke="#00a3cc" stroke-width="1.200"/></svg></button></div>
                        </div>
                    </details>
                    <details class="panel" open>
                        <summary>约束面</summary>
                        <div class="pbody">
                            <div class="line hot"><div class="fill"><svg class="i14"><use href="#n-check"/></svg><span>选择面 (1)</span><span class="badge b4">4</span></div><button class="sq" aria-label="面"><svg><use href="#s-top"/></svg></button></div>
                        </div>
                    </details>
                    <details class="panel" open>
                        <summary>UV 方向</summary>
                        <div class="pbody">
                            <div class="line field"><label for="uv">UV 方向</label><span class="combo w138"><select id="uv"><option>区域</option></select></span></div>
                            <details class="sub"><summary>内部曲线</summary></details>
                            <details class="sub" open>
                                <summary>定义矩形</summary>
                                <div class="sbody">
                                    <div class="line"><span>指定点 1</span><button class="sq small" aria-label="点对话框"><svg viewBox="0 0 16 16"><circle cx="5" cy="4" r="2" fill="#e87a16"/><path d="M2 12h2M7 12h2M12 12h2" stroke="#222" stroke-width="2"/></svg></button><button class="sq" aria-label="点"><svg viewBox="0 0 24 24"><circle cx="12" cy="12" r="6.500" fill="none" stroke="#444" stroke-width="1.200"/><path d="M12 2v20M2 12h20" stroke="#444" stroke-width="1.200"/></svg></button></div>
                                    <div class="line"><span>重置矩形</span><button class="sq" aria-label="重置"><svg viewBox="0 0 24 24"><path d="M2 14c2 12 20 11 20-1 0-6-6-10-14-9M12 0 7 5l5 4" fill="none" stroke="#444" stroke-width="1.200"/></svg></button></div>
                                </div>
                            </details>
                        </div>
                    </details>
                    <details class="panel" open>
                        <summary>形状控制</summary>
                        <div class="pbody lead">
                            <details class="sub"><summary>中心控制</summary></details>
                            <details class="sub" open>
                                <summary>约束</summary>
                                <div class="sbody">
                                    <div class="line field"><label for="cont">连续性</label><span class="combo w138"><select id="cont"><option>G1（相切）</option></select></span></div>
                                </div>
                            </details>
                        </div>
                    </details>
                    <details class="panel"><summary>设置</summary></details>
                    <div class="preview">
                        <label><input type="checkbox" checked>预览</label>
                        <span>显示结果</span><button class="sq small" aria-label="显示结果"><svg><use href="#t-lens"/></svg></button>
                    </div>
                    <div class="collapse"><i class="sort"></i></div>
                    <div class="actions">
                        <button class="ok">&lt; 确定 &gt;</button><button>应用</button><button>取消</button>
                    </div>
                </div>
            </form>
        </section>
    </main>

    <footer class="status">
        <b>选择面</b>
        <span>面 已选定</span>
        <div class="ime">
            <svg class="sogou" viewBox="0 0 30 26"><path d="M1 5 23 0q3 0 4 4l3 17q0 3-3 4L8 26q-3 0-4-4z" fill="#f4561c"/><path d="M24 6C14 4 8 6 9 9c1 4 15 2 15 7 0 4-8 6-16 3" fill="none" stroke="#fff" stroke-width="3.500"/></svg>
            <b>英</b>
            <svg viewBox="0 0 16 16"><circle cx="4" cy="5" r="2" fill="#0b6fd8"/><path d="M9 8h4c0 4-1 6-4 7 1-2 1-2 1-3z" fill="#0b6fd8"/></svg>
            <svg viewBox="0 0 16 16"><rect x="5" y="0" width="6" height="10" rx="3" fill="#0b6fd8"/><path d="M2 7c0 7 12 7 12 0M8 12v3M5 15h6" fill="none" stroke="#0b6fd8" stroke-width="1.600"/></svg>
            <svg viewBox="0 0 16 16"><rect x="0" y="2" width="16" height="12" rx="2" fill="#0b6fd8"/><path d="M2 5h12M2 8h12" stroke="#fff" stroke-width="1.600" stroke-dasharray="2 1"/><path d="M4 11.500h8" stroke="#fff" stroke-width="1.500"/></svg>
            <svg viewBox="0 0 16 16"><path d="M5 2q3 2 6 0l5 3-2 4-2-1v7H4V8L2 9 0 5z" fill="#a57bff"/><path d="M5 2q3 2 6 0l5 3-2 3H2L0 5z" fill="#ff6f61"/></svg>
            <svg viewBox="0 0 16 16"><path d="M2 3q6-2 12 0 2 4 2 8l-2 4-4-4H6l-4 4-2-4q0-4 2-8z" fill="#0b6fd8"/><path d="M5 4v5M2.500 6.500h5" stroke="#fff" stroke-width="1.400"/><circle cx="11" cy="5" r="1" fill="#fff"/><circle cx="12" cy="8" r="1" fill="#fff"/></svg>
            <svg viewBox="0 0 16 16"><g fill="#0b6fd8"><rect x="0" y="1" width="7" height="7" rx="2"/><circle cx="12" cy="4.500" r="3.500"/><rect x="0" y="9" width="7" height="7" rx="2"/><rect x="9" y="9" width="7" height="7" rx="2"/></g></svg>
            <span>通知</span>
        </div>
        <div class="mark">CSDN @山涧果子</div>
    </footer>

    <script>
        // pad the navigator with blank striped rows
        var rows = document.getElementById('rows');
        for (var i = 0; i < 40; i++) {
            var tr = document.createElement('tr');
            tr.innerHTML = '<td></td><td></td><td></td><td></td>';
            rows.appendChild(tr);
        }
    </script>
</body>
</html>
```
FILE: styles.css
```
* {
    box-sizing: border-box;
}
body {
    margin: 0;
    height: 100vh;
    display: flex;
    flex-direction: column;
    overflow: hidden;
    background: #fff;
    color: #1a1a1a;
    font: 12px/16px "Noto Sans", "Noto Sans CJK SC", sans-serif;
}
button, select, input {
    font: inherit;
    color: inherit;
}
button {
    background: none;
    border: 0;
    padding: 0;
}
svg {
    display: block;
    flex: none;
}
.sprite {
    position: absolute;
    width: 0;
    height: 0;
}
.i14 { width: 14px; height: 14px; }
.i16 { width: 16px; height: 16px; }
.i18 { width: 18px; height: 18px; }

.tri {
    flex: none;
    width: 0;
    height: 0;
    border: 3px solid transparent;
    border-top: 4px solid currentColor;
    border-bottom: 0;
}
.sort {
    display: inline-block;
    border: 5px solid transparent;
    border-bottom: 5px solid #111;
    border-top: 0;
}
.vline {
    flex: none;
    width: 1px;
    height: 26px;
    background: #d6d6d6;
}

/* header */
.app-header {
    flex: none;
    height: 56px;
    background: linear-gradient(90deg, #006487, #0079a6);
    color: #fff;
}
.title-row {
    position: relative;
    height: 26px;
    display: flex;
    align-items: center;
    justify-content: space-between;
}
.quick {
    display: flex;
    align-items: center;
    gap: 5px;
    padding-left: 4px;
}
.logo {
    font: bold 21px/24px "Noto Sans", sans-serif;
    width: 32px;
}
.vsep {
    width: 1px;
    height: 20px;
    margin: 0 1px;
    background: #004f6b;
}
.quick .off {
    color: #3086a6;
}
.window-menu {
    display: flex;
    align-items: center;
    gap: 3px;
}
.tri.bar {
    position: relative;
    border-width: 4px 4px 0;
}
.tri.bar::before {
    content: "";
    position: absolute;
    left: -4px;
    top: -7px;
    width: 8px;
    height: 1px;
    background: #fff;
}
.doc-title {
    position: absolute;
    left: 0;
    right: 0;
    text-align: center;
    padding-left: 288px;
    pointer-events: none;
}
.win-ctl {
    display: flex;
    align-items: center;
    gap: 5px;
    padding-right: 4px;
}
.win-ctl b {
    margin-right: 18px;
    font: 800 14px/16px "Open Sans", sans-serif;
}
.tabs {
    display: flex;
    align-items: stretch;
    height: 30px;
    font-size: 13px;
    line-height: 28px;
}
.tabs a {
    color: #fff;
    text-decoration: none;
    white-space: nowrap;
    padding: 0 11px;
}
.tabs .file {
    padding: 0 25px 0 19px;
}
.tabs .active {
    color: #ffcd50;
    border-bottom: 2px solid #ffcd50;
    height: 28px;
}
.tab-tools {
    display: flex;
    align-items: center;
    gap: 8px;
    margin-left: auto;
    padding-right: 4px;
    height: 28px;
}
.search {
    display: flex;
    align-items: center;
    width: 178px;
    height: 21px;
    background: #fff;
    border: 1px solid #777;
    color: #333;
}
.search input {
    flex: 1;
    min-width: 0;
    border: 0;
    padding: 0 1px;
    font-size: 12px;
    line-height: 16px;
    outline: 0;
}
.search input::placeholder {
    color: #a8a8a8;
}
.help {
    width: 16px;
    height: 16px;
    border: 1px solid #fff;
    border-radius: 50%;
    font-size: 12px;
    line-height: 14px;
    text-align: center;
}
.bang {
    width: 20px;
    text-align: center;
    font-size: 18px;
}

/* ribbon */
.ribbon {
    flex: none;
    display: flex;
    position: relative;
    height: 94px;
    padding-top: 5px;
    border-bottom: 1px solid #d6d6d6;
    font-size: 11px;
    line-height: 14px;
}
.group {
    display: flex;
    flex-direction: column;
    height: 84px;
    padding: 0 4px 0 9px;
    border-right: 1px solid #d6d6d6;
}
.group:last-of-type {
    padding: 0 8px 0 9px;
}
.tools {
    display: flex;
    gap: 1px;
    height: 70px;
}
.big {
    display: flex;
    flex-direction: column;
    align-items: center;
    min-width: 40px;
    padding: 0 4px;
    white-space: nowrap;
}
.big svg {
    width: 32px;
    height: 32px;
    margin-bottom: 5px;
}
.big .tri {
    margin-top: 5px;
}
.stack {
    margin: 4px 5px 0;
}
.stack button {
    display: flex;
    align-items: center;
    gap: 4px;
    height: 24px;
    margin-bottom: 10px;
    white-space: nowrap;
}
.stack svg {
    width: 24px;
    height: 24px;
}
.caption {
    position: relative;
    padding-right: 18px;
    text-align: center;
    color: #006487;
}
.caption .tri {
    position: absolute;
    right: 4px;
    top: 6px;
    color: #1a1a1a;
}
.ribbon-end {
    margin: auto 6px 8px auto;
}

/* selection bar */
.selbar {
    flex: none;
    display: flex;
    align-items: center;
    height: 28px;
    padding: 0 6px 0 12px;
    border-bottom: 1px solid #a0a0a0;
}
.menu {
    display: flex;
    align-items: center;
    margin-right: 8px;
    font-size: 11px;
}
.menu .tri {
    margin-left: 6px;
}
.burger {
    width: 10px;
    height: 9px;
    margin-right: 7px;
    border: solid #333;
    border-width: 1px 0;
    background: linear-gradient(#333, #333) 0 3px / 100% 1px no-repeat;
}
.combo {
    position: relative;
    flex: none;
    display: flex;
    height: 22px;
    background: #fff;
    border: 1px solid #666;
}
.combo::after {
    content: "";
    position: absolute;
    right: 5px;
    top: 50%;
    margin-top: -2px;
    border: 4px solid transparent;
    border-top: 4px solid #111;
    border-bottom: 0;
    pointer-events: none;
}
.combo select {
    appearance: none;
    flex: 1;
    min-width: 0;
    border: 0;
    padding: 0 2px;
    background: none;
    outline: 0;
}
.combo.off {
    border-color: #bbb;
}
.combo.off select {
    color: #aaa;
    opacity: 1;
}
.combo.off::after {
    border-top-color: #999;
}
.w138 { width: 138px; }
.w148 { width: 148px; }
.w156 { width: 156px; }
.selbar > .combo {
    margin: 0 8px 0 10px;
}
.selbar > .combo:first-of-type {
    margin-left: 13px;
}
.sel-icons {
    display: flex;
    gap: 9px;
    margin: 0 9px 0 0;
}
.selbar > .tri {
    margin: 0 10px 0 0;
}
.selbar > .tri.end {
    margin: 4px 0 0 auto;
}

/* work area */
.work {
    flex: 1;
    min-height: 0;
    display: flex;
    border-bottom: 1px solid #a0a0a0;
}
.resbar {
    flex: none;
    width: 37px;
    background: #dcdcdc;
    border-right: 1px solid #a0a0a0;
}
.resbar button {
    display: block;
    width: 36px;
    height: 44px;
    padding: 9px 0 11px 7px;
}
.resbar svg {
    width: 24px;
    height: 24px;
}
.resbar .gear {
    height: 33px;
    padding: 6px 0 0 9px;
}
.resbar .gear svg {
    width: 18px;
    height: 18px;
}
.resbar .on {
    width: 34px;
    margin-left: 3px;
    padding-left: 3px;
    background: #fff;
    border: 1px solid #a0a0a0;
    border-right: 0;
}
.navigator {
    flex: none;
    display: flex;
    flex-direction: column;
    width: 322px;
    padding: 0 8px 5px;
    border-right: 1px solid #a0a0a0;
}
.nav-title {
    display: flex;
    align-items: center;
    gap: 4px;
    height: 27px;
    padding: 0 2px 1px 0;
    margin-left: -2px;
}
.maxi {
    width: 12px;
    height: 11px;
    margin-left: auto;
    border: 1px solid #000;
    border-top-width: 2px;
}
.tree {
    flex: 1;
    min-height: 0;
    display: flex;
    flex-direction: column;
    border: 1px solid #d4d4d4;
}
.tree-scroll {
    flex: 1;
    min-height: 0;
    overflow: hidden;
}
.tree table {
    width: 100%;
    table-layout: fixed;
    border-collapse: separate;
    border-spacing: 0;
}
.tree .c2 { width: 39px; }
.tree .c3 { width: 24px; }
.tree .c4 { width: 45px; }
.tree th {
    height: 21px;
    padding: 0 6px;
    background: #efefef;
    border: solid #d4d4d4;
    border-width: 0 1px 1px 0;
    text-align: left;
    font-weight: normal;
    white-space: nowrap;
}
.tree th .sort {
    margin: 0 0 2px 18px;
}
.tree td {
    height: 20px;
    padding: 0;
    border: solid #e8e8e8;
    border-width: 0 1px 1px 0;
    line-height: 19px;
}
.tree th:last-child, .tree td:last-child {
    border-right: 0;
}
.tree tr:nth-child(even) td {
    background: #fafafa;
}
.tree td > svg {
    margin: 0 auto 0 5px;
}
.tree td > .tl {
    width: 8px;
    height: 15px;
    margin-left: 8px;
}
.node {
    display: flex;
    align-items: center;
    height: 19px;
    white-space: nowrap;
}
.node span {
    padding-left: 3px;
}
.c19 { width: 19px; height: 20px; }
.c38 { width: 38px; height: 20px; }
.dim { color: #a3a3a3; }
.magenta { color: #cc33cc; }
.cyan { color: #1a9fd0; }
.bold { font-weight: bold; }
.hscroll {
    height: 16px;
    padding: 7px 60px 0 17px;
    background: #efefef;
}
.hscroll i {
    display: block;
    height: 2px;
    background: #868a86;
}
.splitter {
    height: 6px;
    margin: 2px 0 3px;
    background: #dcdcdc;
    border: 1px solid #a0a0a0;
}
.fold {
    height: 24px;
    border-bottom: 2px solid #d0d0d0;
    color: #006487;
    font-size: 14px;
    line-height: 23px;
}
summary {
    display: flex;
    align-items: center;
    list-style: none;
}
summary::before {
    content: "";
    border: 4px solid transparent;
    border-left: 5px solid #006487;
    border-right: 0;
}
details[open] > summary::before {
    border: 4px solid transparent;
    border-top: 4px solid #006487;
    border-bottom: 0;
    margin-left: -2px;
    margin-right: -1px;
}
.fold summary {
    gap: 9px;
    padding-left: 10px;
}

/* graphics window */
.viewport {
    position: relative;
    flex: 1;
    min-width: 0;
    overflow: hidden;
}
.edge-line {
    height: 2px;
    margin-top: 25px;
    background: #006487;
}
.float-bar {
    display: flex;
    align-items: center;
    width: 492px;
    height: 39px;
    margin-left: 535px;
    padding: 6px 6px 0 13px;
    gap: 8px;
    border-bottom: 1px solid #d6d6d6;
}
.float-bar svg {
    width: 24px;
    height: 24px;
    margin-left: 2px;
    margin-right: -1px;
}
.float-bar .dots {
    width: 14px;
    height: 2px;
    margin: 0 8px 0 6px;
    background: repeating-linear-gradient(90deg, #222 0 2px, transparent 2px 6px);
}
.float-bar .tri {
    margin: 10px 0 0 -4px;
}
.model {
    position: absolute;
    left: 521px;
    top: 121px;
    width: 520px;
    height: 600px;
}
.callout {
    position: absolute;
    left: 857px;
    top: 411px;
    display: flex;
    align-items: center;
    gap: 9px;
    width: 46px;
    height: 29px;
    padding: 0 2px;
    background: #efefef;
    border: 1px solid #999;
    white-space: nowrap;
}
.grip {
    flex: none;
    width: 7px;
    height: 23px;
    background: radial-gradient(circle, #aaa 1px, transparent 2px) 0 0 / 4px 4px;
}
.triad {
    position: absolute;
    left: 71px;
    top: 677px;
    width: 130px;
    height: 120px;
}
.badge {
    position: absolute;
    width: 24px;
    height: 24px;
    border: 2px solid #fff;
    border-radius: 50%;
    background: #0000fa;
    box-shadow: 1px 2px 4px rgba(0, 0, 0, 0.6);
    color: #fff;
    font: bold 12px/20px "DejaVu Sans", sans-serif;
    text-align: center;
}
.b1 { left: 98px; top: 9px; }
.b2 { left: 102px; top: 8px; }
.b3 { left: 661px; top: 217px; }
.b4 { left: 93px; top: 6px; }
.b5 { left: 723px; top: 503px; }

/* dialog */
.dialog {
    position: absolute;
    left: 1px;
    top: 0;
    width: 322px;
    background: #efefef;
    border: solid #d0d0d0;
    border-width: 0 1px 1px 0;
}
.dlg-title {
    display: flex;
    align-items: center;
    gap: 6px;
    height: 24px;
    margin-right: -1px;
    padding: 0 8px 0 6px;
    background: #006487;
    color: #fff;
    font-size: 14px;
}
.dlg-title svg {
    width: 14px;
    height: 14px;
}
.dlg-title span {
    flex: 1;
    padding-left: 3px;
}
.dlg-title b {
    width: 14px;
    text-align: center;
}
.dlg-body {
    display: flex;
    flex-direction: column;
    gap: 4px;
    padding: 6px 5px 10px 6px;
}
.panel, .sub {
    background: #fff;
    border: 1px solid #d0d0d0;
}
.type {
    position: relative;
    height: 42px;
    padding: 7px 8px;
}
.focus {
    height: 26px;
}
.focus .inner {
    display: flex;
    align-items: center;
    flex: 1;
    margin: 2px 18px 2px 2px;
    padding-left: 2px;
    background: #d9ebf0;
    border: 1px dotted #333;
}
.redbox {
    position: absolute;
    left: -1px;
    top: 4px;
    width: 84px;
    height: 31px;
    border: 3px solid #f00;
    box-shadow: 1px 2px 5px rgba(0, 0, 0, 0.6), inset 1px 2px 5px rgba(0, 0, 0, 0.5);
    pointer-events: none;
}
.panel > summary, .sub > summary {
    gap: 8px;
    height: 22px;
    padding-left: 10px;
    color: #006487;
    font-size: 13px;
    font-weight: bold;
}
.sub > summary {
    gap: 9px;
}
.pbody {
    display: flex;
    flex-direction: column;
    gap: 4px;
    padding: 7px 8px;
}
.lead {
    padding-top: 10px;
}
.sbody {
    display: flex;
    flex-direction: column;
    gap: 2px;
    padding: 8px;
}
.line {
    position: relative;
    display: flex;
    align-items: center;
    gap: 2px;
}
.line > span:first-of-type {
    margin-right: auto;
}
.line .i14 {
    margin: 0 3px 0 1px;
}
.fill {
    position: relative;
    flex: 1;
    display: flex;
    align-items: center;
    gap: 2px;
    height: 32px;
    background: #ffdf78;
}
.field {
    justify-content: space-between;
}
.line .combo {
    height: 25px;
    margin: 0;
}
.line .combo:first-of-type {
    margin-right: 0;
}
.line .combo select {
    padding: 0 4px;
}
.sq {
    flex: none;
    display: flex;
    align-items: center;
    justify-content: center;
    width: 32px;
    height: 32px;
    background: #fff;
    border: 1px solid #777;
}
.sq svg {
    width: 24px;
    height: 24px;
}
.hot .sq {
    background: #ffdf78;
    border-color: #ffc220;
}
.small {
    width: 24px;
    height: 24px;
}
.small svg {
    width: 18px;
    height: 18px;
}
.preview {
    display: flex;
    align-items: center;
    height: 22px;
    padding: 0 4px 0 5px;
    gap: 2px;
}
.preview label {
    display: flex;
    align-items: center;
    gap: 4px;
    margin-right: auto;
}
.preview input {
    width: 13px;
    height: 13px;
    margin: 0;
    accent-color: #0a5fc0;
}
.preview .sq {
    background: none;
    color: #444;
}
.collapse {
    height: 14px;
    border-bottom: 1px solid #d0d0d0;
    text-align: center;
    line-height: 10px;
}
.actions {
    display: flex;
    justify-content: flex-end;
    gap: 5px;
    padding: 5px 10px 0;
}
.actions button {
    width: 54px;
    height: 25px;
    background: #fff;
    border: 1px solid #006487;
    color: #006487;
}
.actions .ok {
    background: #006487;
    color: #fff;
}
.triad text {
    font: 12px "Noto Sans", sans-serif;
}

/* status line */
.status {
    position: relative;
    flex: none;
    display: flex;
    height: 19px;
    padding: 2px 3px;
    font-size: 11px;
}
.status > span {
    margin-left: 871px;
}
.ime {
    position: absolute;
    right: 54px;
    top: -8px;
    display: flex;
    align-items: center;
    gap: 8px;
    height: 25px;
    padding-top: 10px;
}
.ime svg {
    width: 16px;
    height: 16px;
}
.ime .sogou {
    width: 30px;
    height: 26px;
    margin: -6px -2px 0 0;
}
.ime b {
    color: #0b6fd8;
    font-size: 14px;
}
.ime span {
    margin-left: -4px;
}
.mark {
    position: absolute;
    right: 6px;
    bottom: 13px;
    color: rgba(225, 225, 225, 0.85);
    font-size: 36px;
    line-height: 40px;
    text-shadow: 1px 1px 1px #888;
    white-space: nowrap;
}
```
